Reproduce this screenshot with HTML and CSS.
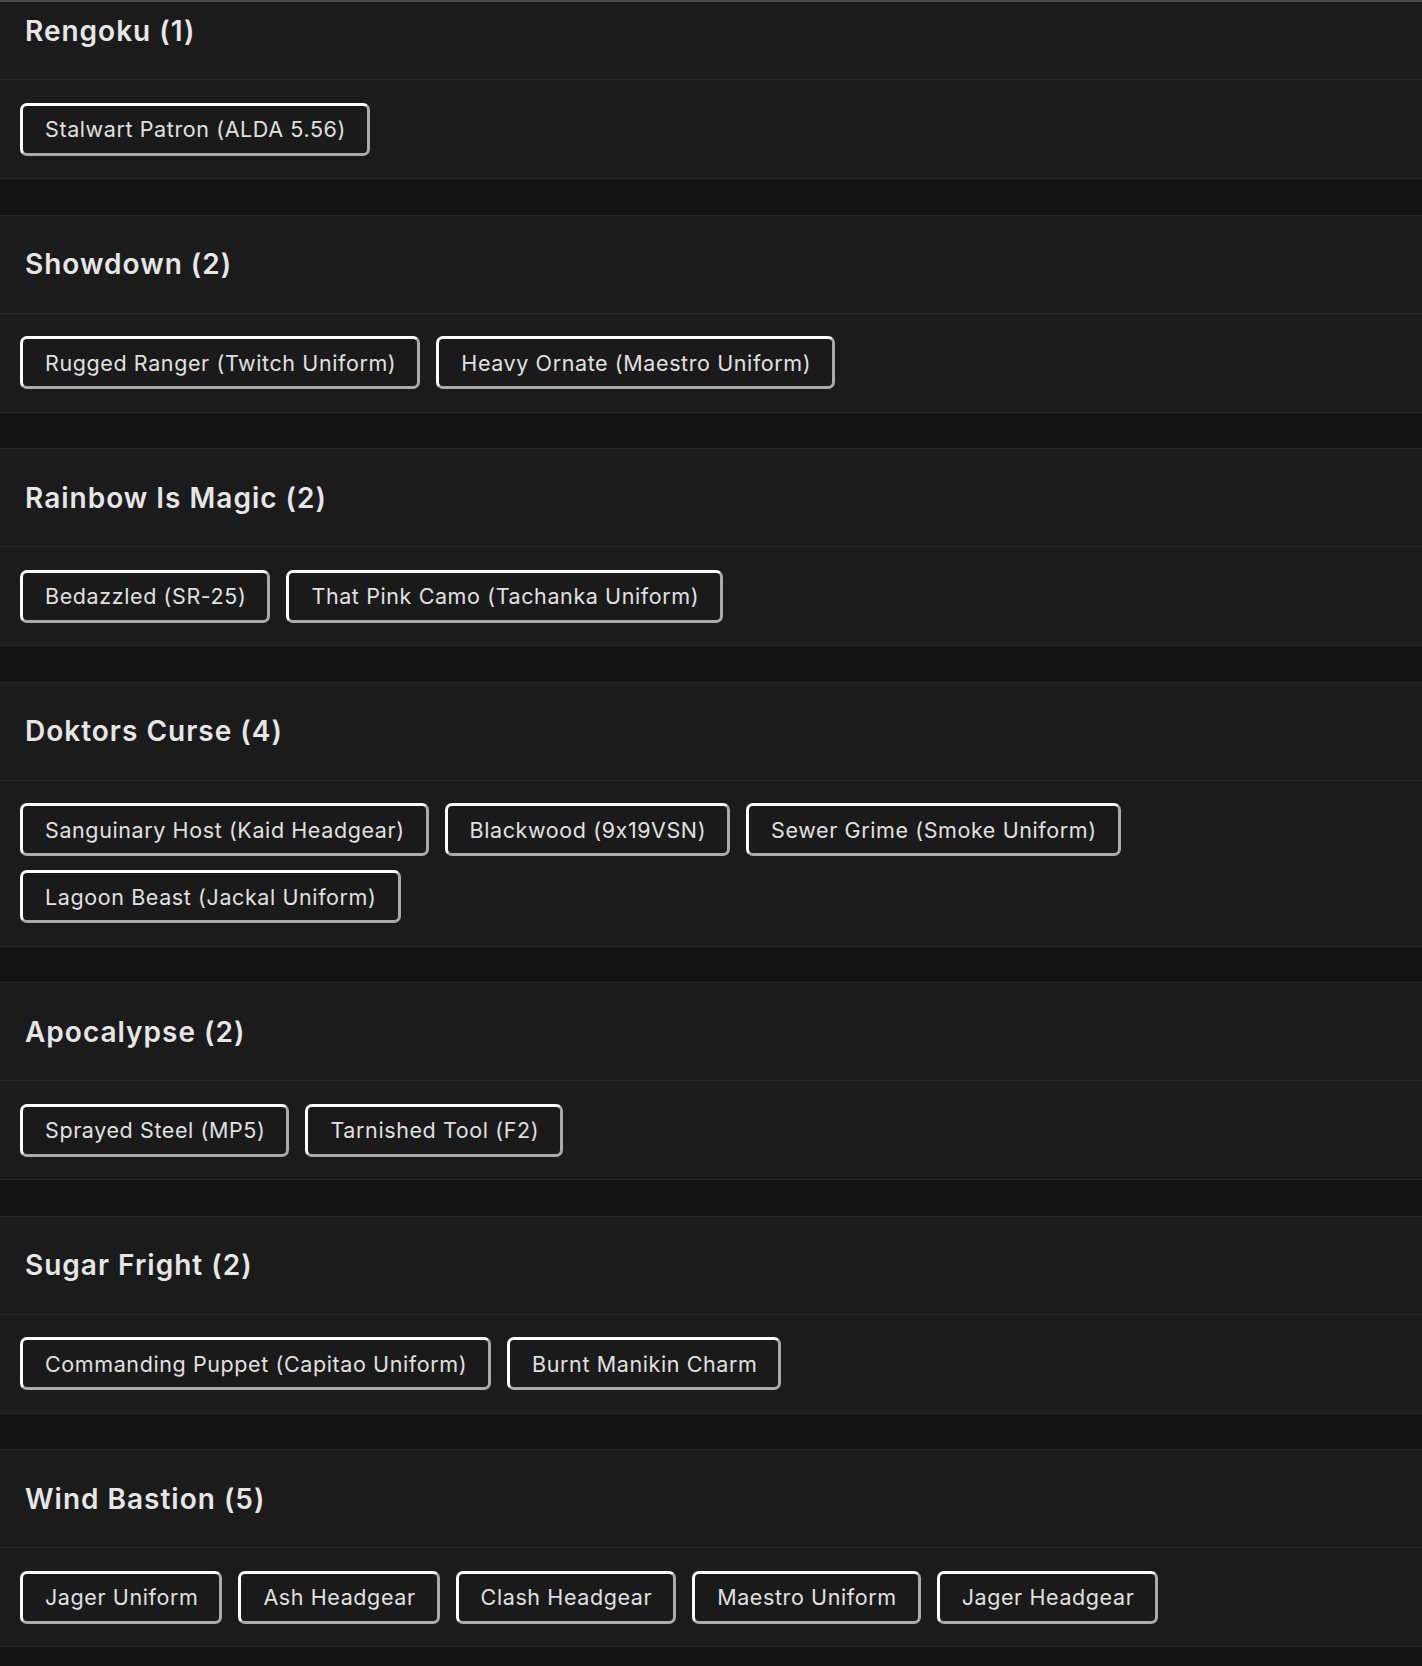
FILE: index.html
```html
<!DOCTYPE html>
<html lang="en">
<head>
<meta charset="utf-8">
<title>Collections</title>
<link rel="stylesheet" href="styles.css">
</head>
<body>
<div class="topbar"></div>
<main class="viewport">
  <div class="list">
    <section class="card">
      <h2 class="card-head">Rengoku (1)</h2>
      <div class="card-body">
        <button class="chip">Stalwart Patron (ALDA 5.56)</button>
      </div>
    </section>
    <section class="card">
      <h2 class="card-head">Showdown (2)</h2>
      <div class="card-body">
        <button class="chip">Rugged Ranger (Twitch Uniform)</button>
        <button class="chip">Heavy Ornate (Maestro Uniform)</button>
      </div>
    </section>
    <section class="card">
      <h2 class="card-head">Rainbow Is Magic (2)</h2>
      <div class="card-body">
        <button class="chip">Bedazzled (SR-25)</button>
        <button class="chip">That Pink Camo (Tachanka Uniform)</button>
      </div>
    </section>
    <section class="card">
      <h2 class="card-head">Doktors Curse (4)</h2>
      <div class="card-body">
        <button class="chip">Sanguinary Host (Kaid Headgear)</button>
        <button class="chip">Blackwood (9x19VSN)</button>
        <button class="chip">Sewer Grime (Smoke Uniform)</button>
        <button class="chip">Lagoon Beast (Jackal Uniform)</button>
      </div>
    </section>
    <section class="card">
      <h2 class="card-head">Apocalypse (2)</h2>
      <div class="card-body">
        <button class="chip">Sprayed Steel (MP5)</button>
        <button class="chip">Tarnished Tool (F2)</button>
      </div>
    </section>
    <section class="card">
      <h2 class="card-head">Sugar Fright (2)</h2>
      <div class="card-body">
        <button class="chip">Commanding Puppet (Capitao Uniform)</button>
        <button class="chip">Burnt Manikin Charm</button>
      </div>
    </section>
    <section class="card">
      <h2 class="card-head">Wind Bastion (5)</h2>
      <div class="card-body">
        <button class="chip">Jager Uniform</button>
        <button class="chip">Ash Headgear</button>
        <button class="chip">Clash Headgear</button>
        <button class="chip">Maestro Uniform</button>
        <button class="chip">Jager Headgear</button>
      </div>
    </section>
  </div>
</main>
</body>
</html>
```

FILE: styles.css
```css
html, body {
  margin: 0;
  padding: 0;
  background: #131313;
  font-family: "Inter", "Noto Sans", sans-serif;
  color: #e4e4e4;
}

.topbar {
  height: 2px;
  background: #4a4a4a;
  position: relative;
  z-index: 2;
}

.viewport {
  height: calc(100vh - 2px);
  overflow: hidden;
}

.list {
  margin-top: -21px;
  display: flex;
  flex-direction: column;
  gap: 35.5px;
}

.card {
  background: #1b1b1b;
  border-top: 1px solid #282828;
  border-bottom: 1px solid #282828;
}

.card-head {
  margin: 0;
  height: 98px;
  display: flex;
  align-items: center;
  padding: 0 0 0 25px;
  box-sizing: border-box;
  border-bottom: 1px solid #282828;
  font-size: 28px;
  font-weight: 600;
  letter-spacing: 1px;
  color: #e6e6e6;
}

.card-body {
  display: flex;
  flex-wrap: wrap;
  gap: 14px 16px;
  padding: 22.5px 20px 22.5px 20px;
}

.chip {
  height: 53px;
  box-sizing: border-box;
  padding: 0 21px 0 22px;
  background: #1a1a1a;
  border-style: solid;
  border-width: 3px;
  border-color: #ffffff #aaaaaa #aaaaaa #ffffff;
  border-radius: 7px;
  font-family: "Inter", "Noto Sans", sans-serif;
  font-size: 21.5px;
  font-weight: 400;
  letter-spacing: 0.6px;
  color: #e0e0e0;
  cursor: pointer;
}
```
